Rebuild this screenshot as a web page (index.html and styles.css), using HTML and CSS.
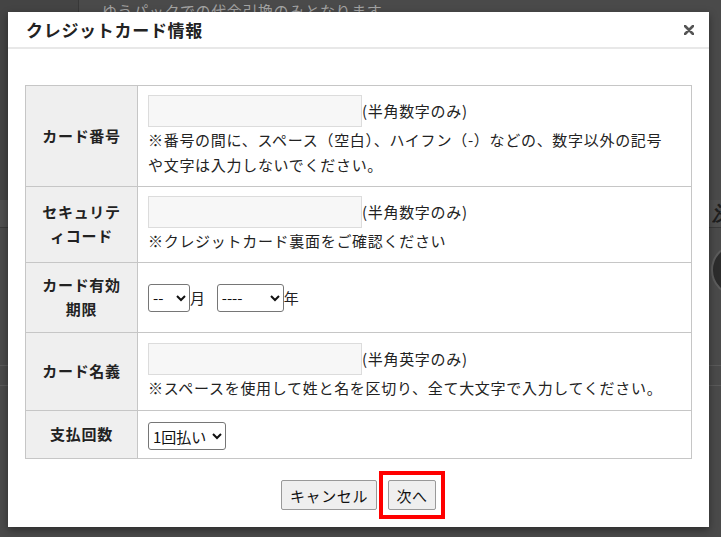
FILE: index.html
```html
<!DOCTYPE html>
<html lang="ja">
<head>
    <meta charset="UTF-8">
    <meta name="viewport" content="width=device-width, initial-scale=1.0">
    <title>クレジットカード情報</title>
    <link rel="stylesheet" href="styles.css">
</head>
<body>
    <!-- page behind the dimmed overlay -->
    <div class="page">
        <div class="page-top">
            <div class="side"></div>
            <p class="notice">ゆうパックでの代金引換のみとなります</p>
        </div>
        <div class="section-head"><span class="section-title">決</span></div>
        <div class="badge-row"><span class="circle"></span></div>
        <div class="page-rows">
            <div class="page-row"></div>
            <div class="page-row"></div>
        </div>
    </div>

    <div class="modal">
        <div class="modal-head">
            <h1 class="modal-title">クレジットカード情報</h1>
            <span class="modal-close">
                <svg width="10" height="10" viewBox="0 0 10 10">
                    <path d="M1 1L9 9M9 1L1 9" stroke="#555" stroke-width="2.6" stroke-linecap="round"/>
                </svg>
            </span>
        </div>

        <div class="modal-body">
            <table class="card-table">
                <tr>
                    <th>カード番号</th>
                    <td>
                        <div class="field">
                            <input type="text" class="text-input">
                            <span class="hint">(半角数字のみ)</span>
                        </div>
                        <p class="note">※番号の間に、スペース（空白）、ハイフン（-）などの、数字以外の記号や文字は入力しないでください。</p>
                    </td>
                </tr>
                <tr>
                    <th>セキュリティコード</th>
                    <td>
                        <div class="field">
                            <input type="text" class="text-input">
                            <span class="hint">(半角数字のみ)</span>
                        </div>
                        <p class="note">※クレジットカード裏面をご確認ください</p>
                    </td>
                </tr>
                <tr>
                    <th>カード有効期限</th>
                    <td>
                        <div class="field">
                            <select class="select select-month"><option>--</option></select>
                            <span class="unit">月</span>
                            <select class="select select-year"><option>----</option></select>
                            <span class="unit">年</span>
                        </div>
                    </td>
                </tr>
                <tr class="row-name">
                    <th>カード名義</th>
                    <td>
                        <div class="field">
                            <input type="text" class="text-input">
                            <span class="hint">(半角英字のみ)</span>
                        </div>
                        <p class="note">※スペースを使用して姓と名を区切り、全て大文字で入力してください。</p>
                    </td>
                </tr>
                <tr>
                    <th>支払回数</th>
                    <td>
                        <select class="select select-pay"><option>1回払い</option></select>
                    </td>
                </tr>
            </table>

            <div class="actions">
                <button class="btn btn-cancel">キャンセル</button>
                <span class="mark"><button class="btn btn-next">次へ</button></span>
            </div>
        </div>
    </div>
</body>
</html>
```

FILE: styles.css
```css
:root {
    --overlay: #4a4a4a;
    --line: #c6c6c6;
    --label-bg: #efefef;
    --text: #222222;
}

* {
    box-sizing: border-box;
    margin: 0;
    padding: 0;
}

body {
    font-family: "Noto Sans CJK JP", "Noto Sans", sans-serif;
    background-color: var(--overlay);
    color: var(--text);
    width: 721px;
    height: 537px;
    overflow: hidden;
    position: relative;
}

/* dimmed page behind the dialog */
.page-top {
    display: flex;
    height: 200px;
}

.side {
    width: 79px;
    background-color: #444444;
    border-right: 1px solid #383838;
}

/* only the top of this line peeks out above the dialog */
.notice {
    height: 12px;
    overflow: hidden;
    padding: 0 0 0 23px;
    font-size: 15px;
    line-height: 22px;
    color: #a3a3a3;
    letter-spacing: 0.6px;
}

.section-head {
    display: flex;
    justify-content: flex-end;
    height: 28px;
    background-color: #4f4f4f;
    border-bottom: 1px solid #3a3a3a;
}

.section-title {
    width: 9px;
    overflow: hidden;
    font-family: "DejaVu Serif", serif;
    font-style: italic;
    font-weight: bold;
    font-size: 20px;
    line-height: 26px;
    color: #1e1e1e;
    white-space: nowrap;
}

.badge-row {
    height: 137px;
    padding: 16px 0 0 711px;
}

.circle {
    display: block;
    width: 52px;
    height: 52px;
    border-radius: 50%;
    background-color: #2c2c2c;
    border: 2px solid #5c5c5c;
}

.page-row {
    height: 20px;
    border-top: 1px solid #5a5a5a;
}

/* dialog */
.modal {
    position: absolute;
    left: 8px;
    top: 12px;
    width: 701px;
    height: 515px;
    background-color: #ffffff;
    box-shadow: 0 3px 8px rgba(0, 0, 0, 0.4);
}

.modal-head {
    height: 37px;
    border-bottom: 2px solid #e8e8e8;
    display: flex;
    align-items: center;
    justify-content: space-between;
    padding: 0 15px 0 18px;
}

.modal-title {
    font-size: 17px;
    font-weight: bold;
    letter-spacing: 0.7px;
    line-height: 24px;
    color: #222222;
}

.modal-close {
    display: flex;
}

.modal-body {
    padding: 36px 17px 0;
}

.card-table {
    width: 667px;
    border-collapse: collapse;
    border: 1px solid var(--line);
    font-size: 15px;
    letter-spacing: 0.7px;
}

.card-table th,
.card-table td {
    border: 1px solid var(--line);
    vertical-align: middle;
}

.card-table th {
    width: 112px;
    background-color: var(--label-bg);
    padding: 10px 12px 11px;
    line-height: 24px;
    font-weight: bold;
    text-align: center;
}

.card-table td {
    padding: 9px 20px 9px 10px;
    text-align: left;
}

.row-name td {
    padding-top: 10px;
    padding-bottom: 10px;
}

.field {
    display: flex;
    align-items: center;
    height: 32px;
}

.text-input {
    width: 214px;
    height: 32px;
    border: 1px solid #dcdcdc;
    background-color: #f7f7f7;
    outline: none;
}

.hint {
    line-height: 22px;
}

.note {
    line-height: 25px;
}

.select {
    height: 28px;
    font-family: inherit;
    font-size: 15px;
    color: #111111;
    background-color: #ffffff;
    border: 1px solid #767676;
    border-radius: 3px;
}

.select-month {
    width: 42px;
}

.select-year {
    width: 67px;
}

.select-pay {
    display: block;
    width: 78px;
    margin: 2px 0 -1px;
}

.unit {
    margin-right: 11px;
}

.actions {
    display: flex;
    justify-content: center;
    align-items: center;
    gap: 11px;
    margin-top: 21px;
}

.btn {
    display: block;
    height: 30px;
    font-family: inherit;
    font-size: 15px;
    letter-spacing: 0.6px;
    color: #111111;
    background-color: #efefef;
    border: 1px solid #999999;
    border-radius: 2px;
    padding: 0;
}

.btn-cancel {
    width: 96px;
}

.btn-next {
    width: 48px;
}

/* red highlight round the next button */
.mark {
    display: block;
    border: 4px solid #ff0000;
    padding: 5px;
    margin: -9px;
}
```
